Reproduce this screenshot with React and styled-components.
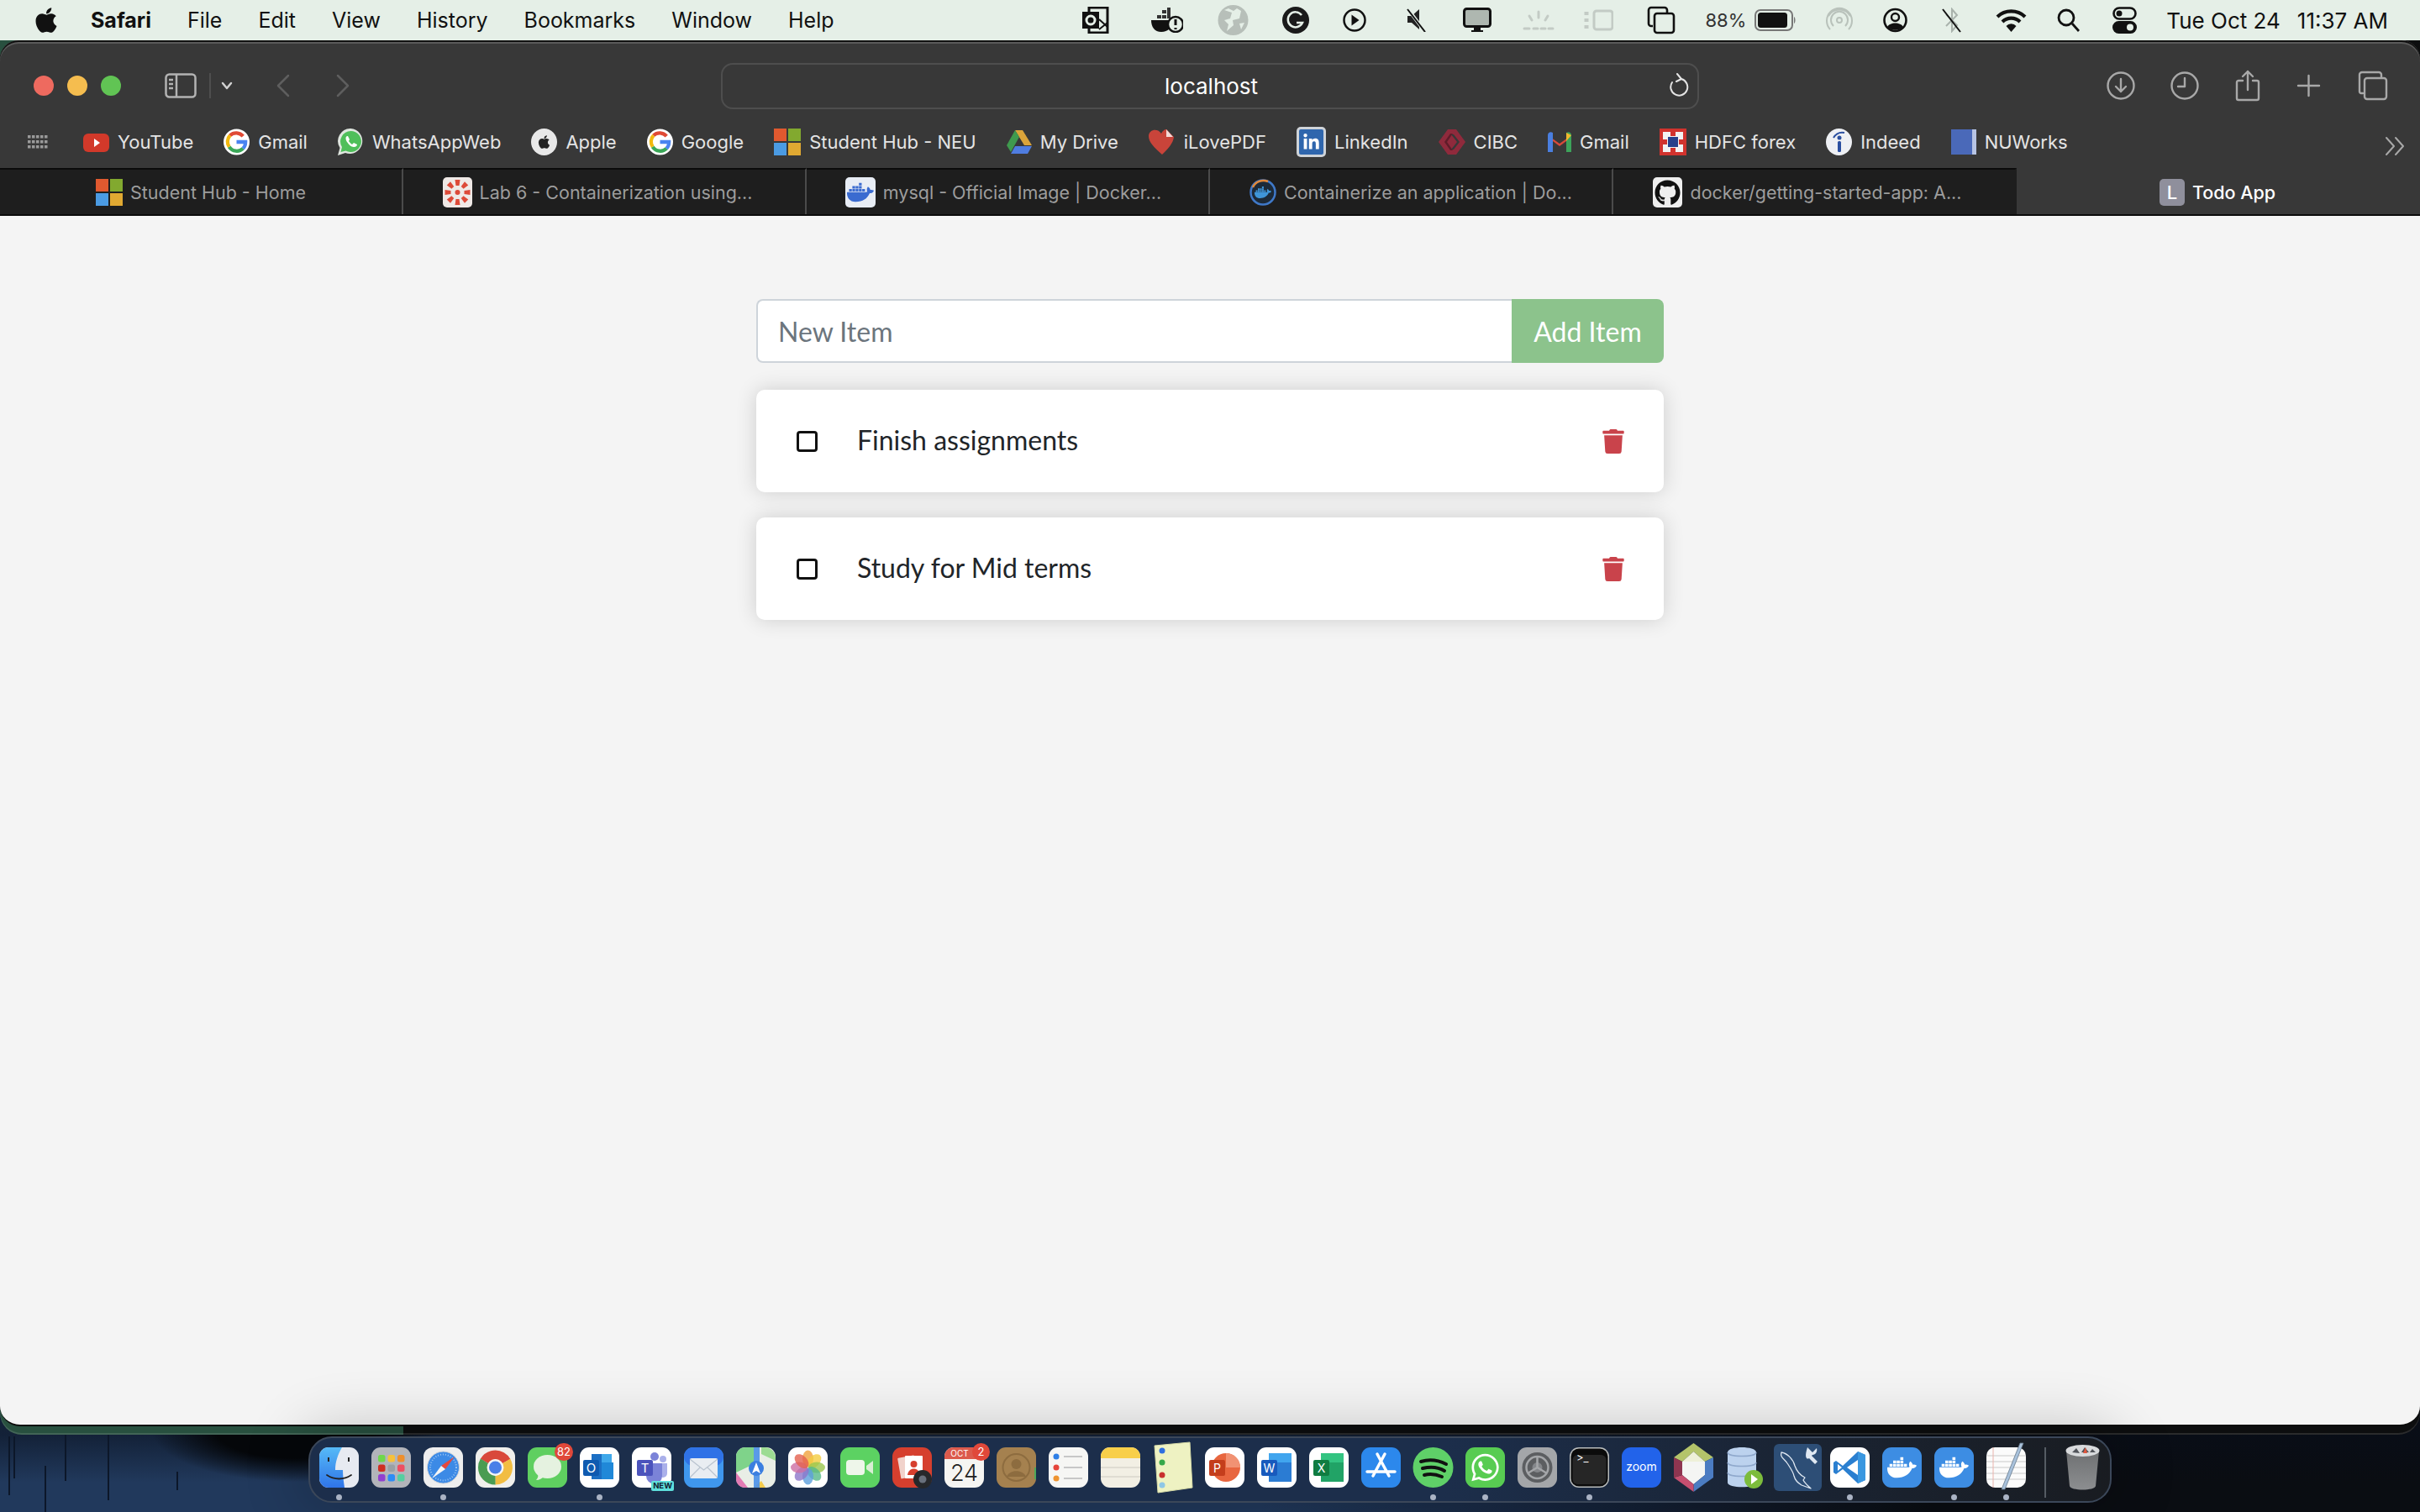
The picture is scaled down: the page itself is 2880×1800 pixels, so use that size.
import React from "react";
import styled, { createGlobalStyle } from "styled-components";
import { FaApple, FaTrash, FaDocker, FaWhatsapp, FaGithub, FaLinkedinIn } from "react-icons/fa";

const GlobalStyle = createGlobalStyle`
  html, body { margin: 0; padding: 0; background: #0b0e13; }
  * { box-sizing: border-box; }
`;

const reed = (x, y, h) => `linear-gradient(#0c1729, #0c1729) ${x}px ${y}px / 2px ${h}px no-repeat`;

const Desktop = styled.div`
  width: 2880px;
  height: 1800px;
  overflow: hidden;
  display: flex;
  flex-direction: column;
  font-family: Inter, "Liberation Sans", sans-serif;
  background:
    ${reed(10, 1710, 70)},
    ${reed(16, 1710, 50)},
    ${reed(53, 1745, 55)},
    ${reed(77, 1708, 55)},
    ${reed(128, 1708, 78)},
    ${reed(210, 1752, 22)},
    radial-gradient(ellipse 170px 62px at 350px 1702px, #05070a 55%, transparent 100%),
    linear-gradient(180deg, rgba(8, 14, 26, 0.55) 1708px, transparent 1765px),
    linear-gradient(90deg, #21395c 0, #21395c 1500px, #15233a 1900px, #0a0d12 2300px);
`;

const MenuBar = styled.header`
  height: 48px;
  flex: none;
  background: #e5efe7;
  display: flex;
  align-items: center;
  justify-content: space-between;
  padding: 0 38px 0 38px;
  color: #111;
  font-size: 25px;
`;

const MenuLeft = styled.nav`
  display: flex;
  align-items: center;
  gap: 43px;
  & > svg { margin-right: -7px; }
`;

const MenuItem = styled.span`
  font-weight: ${(p) => (p.$bold ? 700 : 400)};
`;

const MenuRight = styled.div`
  display: flex;
  align-items: center;
`;

const StatusSlot = styled.span`
  display: flex;
  align-items: center;
  justify-content: center;
  width: ${(p) => p.$w}px;
  margin-left: ${(p) => p.$ml}px;
`;

const StatusText = styled.span`
  margin-left: ${(p) => p.$ml}px;
  font-size: ${(p) => p.$size || 26}px;
  white-space: nowrap;
  color: ${(p) => p.$color || "#111"};
`;

const WindowStack = styled.div`
  height: 1660px;
  flex: none;
  padding-bottom: 10px;
  border-radius: 0 0 26px 26px;
  background: linear-gradient(90deg, #28503f 0, #28503f 480px, #0d0e0f 480px);
  box-shadow: inset 0 -2px 0 rgba(255, 255, 255, 0.12);
`;

const BrowserWindow = styled.main`
  height: 100%;
  border-radius: 22px 22px 24px 24px;
  overflow: hidden;
  display: flex;
  flex-direction: column;
  border-bottom: 2px solid #0b0b0b;
  background: #383838;
  box-shadow: inset 0 2px 0 #111, inset 0 4px 0 #5a5a5a;
`;

const Toolbar = styled.div`
  height: 100px;
  flex: none;
  padding-top: 8px;
  display: grid;
  grid-template-columns: 858px 1164px 1fr;
  align-items: center;
`;

const ToolbarLeft = styled.div`
  display: flex;
  align-items: center;
  padding-left: 40px;
`;

const TrafficLight = styled.span`
  width: 24px;
  height: 24px;
  border-radius: 50%;
  background: ${(p) => p.$color};
  margin-right: 16px;
`;

const NavIcon = styled.span`
  display: flex;
  margin-left: ${(p) => p.$ml}px;
`;

const AddressBar = styled.div`
  height: 55px;
  border: 2px solid #4e4e4e;
  border-radius: 14px;
  display: flex;
  align-items: center;
  justify-content: space-between;
  padding: 0 10px 0 526px;
  color: #fff;
  font-size: 26px;
`;

const ToolbarRight = styled.div`
  display: flex;
  align-items: center;
  justify-content: flex-end;
  padding-right: 38px;
`;

const BookmarkRow = styled.div`
  height: 52px;
  flex: none;
  padding: 0 18px 10px 33px;
  display: flex;
  align-items: center;
  color: #e4e4e4;
  font-size: 22px;
`;

const Bookmark = styled.span`
  display: flex;
  align-items: center;
  gap: 10px;
  margin-left: ${(p) => (p.$first ? 42 : 36)}px;
  white-space: nowrap;
`;

const OverflowIcon = styled.span`
  margin-left: auto;
  display: flex;
  padding-top: 10px;
`;

const TabStrip = styled.div`
  height: 57px;
  flex: none;
  display: grid;
  grid-template-columns: repeat(6, 1fr);
  border-bottom: 2px solid #0b0b0b;
`;

const Tab = styled.div`
  display: flex;
  align-items: center;
  justify-content: center;
  gap: 9px;
  font-size: 21.5px;
  white-space: nowrap;
  padding-right: ${(p) => p.$nudge || 0}px;
  border-top: 2px solid ${(p) => (p.$active ? "#383838" : "#0b0b0b")};
  border-right: 2px solid ${(p) => (p.$active || p.$last ? "transparent" : "#4b4b4b")};
  background: ${(p) => (p.$active ? "#383838" : "#1e1e1e")};
  color: ${(p) => (p.$active ? "#fff" : "#9d9d9d")};
  font-weight: ${(p) => (p.$active ? 500 : 400)};
`;

const Page = styled.section`
  flex: 1;
  background: #f4f4f4;
  padding-top: 99px;
  font-family: Lato, "Liberation Sans", sans-serif;
`;

const TodoColumn = styled.div`
  width: 1080px;
  margin: 0 auto;
  display: flex;
  flex-direction: column;
`;

const AddForm = styled.form`
  height: 76px;
  display: flex;
  margin-bottom: 32px;
`;

const ItemInput = styled.input`
  flex: 1;
  min-width: 0;
  border: 2px solid #ced4da;
  border-right: none;
  border-radius: 8px 0 0 8px;
  background: #fff;
  padding: 0 24px;
  font: 400 32px Lato, sans-serif;
  color: #495057;
  &::placeholder { color: #6c757d; opacity: 1; }
`;

const AddButton = styled.button`
  width: 181px;
  border: none;
  border-radius: 0 8px 8px 0;
  background: #8cc38c;
  color: #fff;
  font: 400 32px Lato, sans-serif;
`;

const ItemCard = styled.article`
  height: 122px;
  margin-bottom: 30px;
  padding: 0 47px 0 48px;
  background: #fff;
  border-radius: 10px;
  box-shadow: 0 0 24px rgba(0, 0, 0, 0.16);
  display: flex;
  align-items: center;
  color: #212529;
  font-size: 32px;
`;

const CheckBox = styled.span`
  width: 25px;
  height: 25px;
  flex: none;
  border: 3px solid #111;
  border-radius: 4px;
  margin-right: 47px;
`;

const ItemName = styled.span`
  flex: 1;
  padding-bottom: 3px;
`;

const DeleteIcon = styled(FaTrash)`
  width: 26px;
  height: 29px;
  color: #c9434b;
`;

const DockRow = styled.footer`
  display: flex;
  justify-content: center;
  padding-top: 2px;
  position: relative;
  z-index: 2;
`;

const Dock = styled.div`
  height: 79px;
  padding: 11px 11px 0;
  display: flex;
  gap: 15px;
  border: 2px solid #3b4759;
  border-radius: 28px;
  background: linear-gradient(90deg, #1c2e4b 0, #1c2e4b 1350px, #1a2434 1750px, #191c21 2146px);
  box-shadow: 0 0 70px 10px rgba(0, 0, 0, 0.2);
`;

const DockSlot = styled.div`
  position: relative;
  width: ${(p) => p.$w || 47}px;
  height: 48px;
  flex: none;
  &::after {
    content: "";
    display: ${(p) => (p.$running ? "block" : "none")};
    position: absolute;
    left: 20px;
    top: 56px;
    width: 7px;
    height: 7px;
    border-radius: 50%;
    background: #aab3c4;
  }
  & > svg { display: block; overflow: visible; }
`;

const DockBadge = styled.span`
  position: absolute;
  top: -5px;
  right: -7px;
  min-width: 21px;
  height: 21px;
  padding: 0 3px;
  border-radius: 11px;
  background: #e0483a;
  color: #fff;
  font-size: 13px;
  line-height: 21px;
  text-align: center;
`;

const NewTag = styled.span`
  position: absolute;
  right: -3px;
  bottom: -4px;
  padding: 0 2px;
  border-radius: 2px;
  background: #5fe0dc;
  color: #123;
  font-size: 9.5px;
  line-height: 12px;
  font-weight: 700;
`;

const DockDivider = styled.span`
  width: 2px;
  height: 60px;
  margin: 0 7px;
  background: #555b63;
`;

const stroke = { fill: "none", stroke: "currentColor", strokeLinecap: "round", strokeLinejoin: "round" };

/* ---- menu bar glyphs ---- */
const OutlookGlyph = () => (
  <svg width="32" height="32" viewBox="0 0 32 32"><path d="M8 1h22v30H8z" fill="none" stroke="#111" strokeWidth="3" /><path d="M0 6h20v20H0z" fill="#111" /><circle cx="10" cy="16" r="5" fill="none" stroke="#e5efe7" strokeWidth="3" /><path d="M20 15l10 9M20 27l10-8" stroke="#111" strokeWidth="2" /></svg>
);
const DockerAlert = () => (
  <svg width="38" height="30" viewBox="0 0 38 30"><path d="M0 15h25c0 9-5 14-13 14S0 23 0 15z" fill="#111" /><path d="M7 9h5v4H7zM13 9h5v4h-5zM13 3h5v4h-5zM19 0h4v13h-4z" fill="#333" /><circle cx="29" cy="20" r="9" fill="#e5efe7" stroke="#111" strokeWidth="2.5" /><path d="M29 14v7M29 24v2" stroke="#111" strokeWidth="3" /></svg>
);
const GlobeGlyph = () => (
  <svg width="37" height="36" viewBox="0 0 37 36"><circle cx="18.5" cy="18" r="18" fill="#b7bfb9" /><path d="M8 6l9 3-2 7-7 2 5 5-2 8 8-7-1-6 8-2 2-9-5-3-4 3-6-3zM26 22l6-1-4 8z" fill="#e5efe7" /></svg>
);
const GrammarlyGlyph = () => (
  <svg width="32" height="32" viewBox="0 0 32 32"><circle cx="16" cy="16" r="16" fill="#1a1a1a" /><path d="M23 10a9 9 0 1 0 1 9h-7" fill="none" stroke="#e5efe7" strokeWidth="2.5" /></svg>
);
const PlayGlyph = () => (
  <svg width="28" height="30" viewBox="0 0 28 30"><circle cx="14" cy="15" r="12.5" fill="none" stroke="#111" strokeWidth="2.5" /><path d="M10.5 8.5l9 6.5-9 6.5z" fill="#111" /></svg>
);
const MuteGlyph = () => (
  <svg width="26" height="28" viewBox="0 0 26 28"><path d="M3 9h5l9-8v24l-9-8H3z" fill="#222" /><path d="M3 0l21 28" stroke="#e5efe7" strokeWidth="4" /><path d="M3 1l21 27" stroke="#111" strokeWidth="2" /></svg>
);
const DisplayGlyph = () => (
  <svg width="34" height="30" viewBox="0 0 34 30"><rect x="1.5" y="1.5" width="31" height="21" rx="3" fill="#aeb7b0" stroke="#111" strokeWidth="3" /><path d="M13 23h8v4h-8zM10 27h14v2H10z" fill="#111" /></svg>
);
const BrightnessGlyph = () => (
  <svg width="38" height="24" viewBox="0 0 38 24" stroke="#c3cbc5" strokeWidth="3" strokeLinecap="round"><path d="M19 2v7M8 7l3 5M30 7l-3 5M2 22h6M13 22h5M22 22h5M31 22h5" /></svg>
);
const StageGlyph = () => (
  <svg width="35" height="26" viewBox="0 0 35 26" fill="none" stroke="#c3cbc5" strokeWidth="3"><rect x="12" y="2" width="22" height="22" rx="3" /><path d="M3 3v4M3 11v4M3 19v4" strokeWidth="5" /></svg>
);
const CopyGlyph = () => (
  <svg width="34" height="34" viewBox="0 0 34 34" fill="none" stroke="#111" strokeWidth="2.6"><path d="M7 24H5a3 3 0 0 1-3-3V5a3 3 0 0 1 3-3h16a3 3 0 0 1 3 3v3" /><rect x="9" y="9" width="23" height="23" rx="3" /></svg>
);
const BatteryGlyph = () => (
  <svg width="50" height="26" viewBox="0 0 50 26"><rect x="1" y="1" width="44" height="24" rx="6" fill="none" stroke="#777" strokeWidth="2" /><rect x="4" y="4" width="35" height="18" rx="3.5" fill="#111" /><path d="M47 9c2 1 2 7 0 8z" fill="#777" /></svg>
);
const AirdropGlyph = () => (
  <svg width="32" height="34" viewBox="0 0 32 34" fill="none" stroke="#b9c2bb" strokeWidth="2"><circle cx="16" cy="17" r="3" /><path d="M9 24a10 10 0 1 1 14 0M5 28a15 15 0 1 1 22 0M3 12a15 15 0 0 1 26 0" /></svg>
);
const UserGlyph = () => (
  <svg width="29" height="32" viewBox="0 0 29 32"><circle cx="14.5" cy="16" r="13" fill="none" stroke="#111" strokeWidth="2.6" /><circle cx="14.5" cy="12.5" r="4.5" fill="none" stroke="#111" strokeWidth="2.4" /><path d="M5 24c3-6 16-6 19 0-4 5-15 5-19 0z" fill="#111" /></svg>
);
const BluetoothOff = () => (
  <svg width="25" height="30" viewBox="0 0 25 30" fill="none"><path d="M6 8l13 13-6 7V2l6 7L6 22" stroke="#a9b2ac" strokeWidth="2" /><path d="M2 2l21 27" stroke="#111" strokeWidth="2" /></svg>
);
const WifiGlyph = () => (
  <svg width="37" height="28" viewBox="0 0 37 28" fill="none" stroke="#111" strokeWidth="4.2"><path d="M2 10a24 24 0 0 1 33 0M8 16a15 15 0 0 1 21 0" /><path d="M18.5 28l-6-7a8 8 0 0 1 12 0z" fill="#111" stroke="none" /></svg>
);
const SearchGlyph = () => (
  <svg width="27" height="28" viewBox="0 0 27 28" fill="none" stroke="#111" strokeWidth="2.8"><circle cx="11" cy="11" r="9" /><path d="M18 18l8 9" /></svg>
);
const ControlGlyph = () => (
  <svg width="29" height="32" viewBox="0 0 29 32"><rect x="1.5" y="1.5" width="26" height="13" rx="6.5" fill="none" stroke="#111" strokeWidth="2.6" /><circle cx="8" cy="8" r="3.5" fill="#111" /><rect x="0" y="17" width="29" height="15" rx="7.5" fill="#111" /><circle cx="21" cy="24.5" r="4" fill="#e5efe7" /></svg>
);

const statusItems = [
  { w: 32, ml: 0, el: <OutlookGlyph /> },
  { w: 38, ml: 50, el: <DockerAlert /> },
  { w: 37, ml: 41, el: <GlobeGlyph /> },
  { w: 32, ml: 40, el: <GrammarlyGlyph /> },
  { w: 28, ml: 40, el: <PlayGlyph /> },
  { w: 26, ml: 46, el: <MuteGlyph /> },
  { w: 34, ml: 43, el: <DisplayGlyph /> },
  { w: 38, ml: 37, el: <BrightnessGlyph /> },
  { w: 35, ml: 35, el: <StageGlyph /> },
  { w: 34, ml: 40, el: <CopyGlyph /> },
];
const trayItems = [
  { w: 32, ml: 35, el: <AirdropGlyph /> },
  { w: 29, ml: 36, el: <UserGlyph /> },
  { w: 25, ml: 40, el: <BluetoothOff /> },
  { w: 37, ml: 40, el: <WifiGlyph /> },
  { w: 27, ml: 36, el: <SearchGlyph /> },
  { w: 29, ml: 39, el: <ControlGlyph /> },
];

/* ---- favicons ---- */
const GoogleIcon = () => (
  <svg width="31" height="32" viewBox="0 0 32 32" fill="none"><circle cx="16" cy="16" r="16" fill="#fff" /><path d="M24 9a11 11 0 0 0-16-1" stroke="#e04a35" strokeWidth="4.4" /><path d="M8 8a11 11 0 0 0-1 14" stroke="#f2b90f" strokeWidth="4.4" /><path d="M7 22a11 11 0 0 0 17 2" stroke="#3aa757" strokeWidth="4.4" /><path d="M24 24c2-2 3-4 3-8H16" stroke="#4a84f0" strokeWidth="4.4" /></svg>
);
const MicrosoftIcon = () => (
  <svg width="32" height="32" viewBox="0 0 32 32"><path d="M0 0h15v15H0z" fill="#e0592f" /><path d="M17 0h15v15H17z" fill="#82a92f" /><path d="M0 17h15v15H0z" fill="#4b9be3" /><path d="M17 17h15v15H17z" fill="#e0a932" /></svg>
);
const YouTubeIcon = () => (
  <svg width="31" height="32" viewBox="0 0 31 32"><rect y="6" width="31" height="22" rx="6" fill="#d2392a" /><path d="M13 12l7 5-7 5z" fill="#fff" /></svg>
);
const WhatsAppIcon = () => (
  <svg width="31" height="32" viewBox="0 0 31 32"><path d="M15.500 0a15 15 0 0 0-13 23L0 32l9-3a15 15 0 1 0 6.500-29z" fill="#dfe6df" /><path d="M15.500 3a12.500 12.500 0 0 0-10.500 19l-1.500 6 6-1.500A12.500 12.500 0 1 0 15.500 3z" fill="#4fbf5a" /><path d="M11 9c-2 1-2 4 0 7s5 6 8 6c3 0 4-2 4-3l-4-2-2 2c-2-1-3-3-4-4l1-2-2-4z" fill="#fff" /></svg>
);
const AppleIcon = () => (
  <svg width="31" height="32" viewBox="0 0 31 32"><ellipse cx="15.500" cy="16" rx="15.500" ry="16" fill="#e8e8e8" /><FaApple x="6.500" y="7" size="18" color="#222" /></svg>
);
const DriveIcon = () => (
  <svg width="30" height="28" viewBox="0 0 30 28"><path d="M10 0h9l11 18h-9z" fill="#dba43a" /><path d="M10 0l5 8L5 26 0 18z" fill="#3f9a4e" /><path d="M5 28l5-9h20l-5 9z" fill="#4f7de0" /></svg>
);
const LovePdfIcon = () => (
  <svg width="32" height="30" viewBox="0 0 32 30"><path d="M16 30C6 21 0 15 0 8c0-8 11-10 15-3 1-3 4-5 6-5l9 9c-1 8-7 14-14 21z" fill="#c9443a" /><path d="M21 0l8 9h-8z" fill="#f3d9d6" /></svg>
);
const LinkedInIcon = () => (
  <svg width="35" height="36" viewBox="0 0 35 36"><rect width="35" height="36" rx="5" fill="#cfd3d8" /><rect x="3" y="3" width="29" height="30" rx="2" fill="#2f66ad" /><FaLinkedinIn x="7" y="8" size="21" color="#fff" /></svg>
);
const CibcIcon = () => (
  <svg width="32" height="30" viewBox="0 0 32 30"><path d="M11 0h10l11 15-11 15H11L0 15z" fill="#8f2a3c" /><path d="M14 5l-7 10 7 10h3l-7-10 7-10z" fill="#5f1c29" /><path d="M18 6h-3l7 9-7 9h3l7-9z" fill="#383838" /></svg>
);
const GmailIcon = () => (
  <svg width="28" height="24" viewBox="0 0 28 24"><path d="M0 4l14 10L28 4v20h-6V11l-8 6-8-6v13H0z" fill="#d84a3a" /><path d="M0 4c0-3 3-5 6-3v23H0z" fill="#4a7fe0" /><path d="M22 1c3-2 6 0 6 3v20h-6z" fill="#3da35a" /><path d="M22 1l6 3-6 7z" fill="#f0b92e" /></svg>
);
const HdfcIcon = () => (
  <svg width="32" height="32" viewBox="0 0 32 32"><rect width="32" height="32" fill="#d1332e" /><path d="M4 4h9v5h6V4h9v9h-5v6h5v9h-9v-5h-6v5H4v-9h5v-6H4z" fill="#f2f2f2" /><rect x="10" y="10" width="12" height="12" fill="#27408b" /></svg>
);
const IndeedIcon = () => (
  <svg width="31" height="32" viewBox="0 0 31 32"><ellipse cx="15.500" cy="16" rx="15.500" ry="16" fill="#eef0f4" /><path d="M9 11c3-5 8-7 13-6" stroke="#2a4fa0" strokeWidth="2" fill="none" /><circle cx="16" cy="11" r="2.500" fill="#2a4fa0" /><rect x="14" y="15" width="4" height="13" rx="1.500" fill="#2a4fa0" /></svg>
);
const NuWorksIcon = () => (
  <svg width="30" height="30" viewBox="0 0 30 30"><rect width="30" height="30" fill="#4a69b9" /><rect x="25" width="5" height="30" fill="#b7c4e4" /></svg>
);
const AppsGridIcon = () => (
  <svg width="24" height="16" viewBox="0 0 24 16" fill="#9a9a9a">
    {[0, 6, 12].flatMap((y) => [0, 5, 10, 15, 20].map((x) => <rect key={`${x}-${y}`} x={x} y={y} width="3.500" height="3.500" />))}
  </svg>
);
const CanvasIcon = () => (
  <svg width="35" height="36" viewBox="0 0 35 36"><rect width="35" height="36" rx="5" fill="#efe9e6" /><g fill="#dd4a38">{[0, 45, 90, 135, 180, 225, 270, 315].map((r) => <path key={r} d="M14.500 3h6l-1 7h-4z" transform={`rotate(${r} 17.500 18)`} />)}</g><circle cx="17.500" cy="18" r="3" fill="#dd4a38" /></svg>
);
const DockerTabIcon = () => (
  <svg width="36" height="36" viewBox="0 0 36 36"><rect width="36" height="36" rx="5" fill="#e8edf5" /><FaDocker x="2" y="2" size="32" color="#3a6bd0" /></svg>
);
const DockerDocsIcon = () => (
  <svg width="32" height="32" viewBox="0 0 32 32"><circle cx="16" cy="16" r="14.500" fill="#1d2a38" stroke="#3f78c8" strokeWidth="2.500" /><path d="M4 10a14 14 0 0 1 18-7" fill="none" stroke="#e0883a" strokeWidth="2.500" /><FaDocker x="6" y="6" size="20" color="#3f95d8" /></svg>
);
const GithubTabIcon = () => (
  <svg width="35" height="36" viewBox="0 0 35 36"><rect width="35" height="36" rx="5" fill="#eee" /><FaGithub x="2" y="3" size="31" color="#111" /></svg>
);

const LetterIcon = styled.span`
  width: 30px;
  height: 32px;
  border-radius: 5px;
  background: #8f8f9c;
  color: #fff;
  font-size: 22px;
  display: flex;
  align-items: center;
  justify-content: center;
`;

const bookmarks = [
  ["YouTube", <YouTubeIcon />],
  ["Gmail", <GoogleIcon />],
  ["WhatsAppWeb", <WhatsAppIcon />],
  ["Apple", <AppleIcon />],
  ["Google", <GoogleIcon />],
  ["Student Hub - NEU", <MicrosoftIcon />],
  ["My Drive", <DriveIcon />],
  ["iLovePDF", <LovePdfIcon />],
  ["LinkedIn", <LinkedInIcon />],
  ["CIBC", <CibcIcon />],
  ["Gmail", <GmailIcon />],
  ["HDFC forex", <HdfcIcon />],
  ["Indeed", <IndeedIcon />],
  ["NUWorks", <NuWorksIcon />],
];

const tabs = [
  { title: "Student Hub - Home", icon: <MicrosoftIcon /> },
  { title: "Lab 6 - Containerization using...", icon: <CanvasIcon />, nudge: 16 },
  { title: "mysql - Official Image | Docker...", icon: <DockerTabIcon />, nudge: 10 },
  { title: "Containerize an application | Do...", icon: <DockerDocsIcon /> },
  { title: "docker/getting-started-app: A...", icon: <GithubTabIcon />, nudge: 16 },
  { title: "Todo App", icon: <LetterIcon>L</LetterIcon>, active: true },
];

/* ---- dock tiles, 47x48 ---- */
const Tile = ({ fill = "#fff", children }) => (
  <svg width="47" height="48" viewBox="0 0 47 48">
    <rect width="47" height="48" rx="11" fill={fill} />
    {children}
  </svg>
);

const Finder = () => (
  <Tile fill="#e7eaf1">
    <defs><linearGradient id="fg" x1="0" y1="0" x2="0" y2="1"><stop offset="0" stopColor="#56baf7" /><stop offset="1" stopColor="#2f74e8" /></linearGradient></defs>
    <path d="M11 0h16c-5 9-8 17-8 27h9c0 7 1 14 2 21H11A11 11 0 0 1 0 37V11A11 11 0 0 1 11 0z" fill="url(#fg)" />
    <path d="M11 12v5M35 12v5" stroke="#222" strokeWidth="2" />
    <path d="M9 33c9 6 20 6 29 0" fill="none" stroke="#222" strokeWidth="1.800" strokeLinecap="round" />
  </Tile>
);
const Launchpad = () => {
  const c = ["#6fd84c", "#f6c13c", "#ee8f2d", "#cf2f22", "#9aa0a4", "#ee4f63", "#9140d0", "#2d8cf5", "#55cfa0"];
  return (
    <Tile fill="#b2b4ba">
      {c.map((f, i) => <rect key={f} x={8 + (i % 3) * 11.500} y={9 + Math.floor(i / 3) * 11.500} width="8.500" height="8.500" rx="2.500" fill={f} />)}
    </Tile>
  );
};
const Safari = () => (
  <Tile fill="#eeeeee">
    <circle cx="23.500" cy="24" r="19" fill="#3c8ae6" stroke="#cfd3d8" strokeWidth="1" />
    <circle cx="23.500" cy="24" r="15.500" fill="none" stroke="#9cc6f3" strokeWidth="2" strokeDasharray="1 2" />
    <path d="M37 11L21 22l5 4z" fill="#e6483d" />
    <path d="M10 37l16-11-5-4z" fill="#f5f5f5" />
  </Tile>
);
const Chrome = () => (
  <Tile fill="#f0efec">
    <circle cx="23.500" cy="24" r="15" fill="none" stroke="#d9483b" strokeWidth="11" strokeDasharray="31.420 62.830" transform="rotate(-150 23.500 24)" />
    <circle cx="23.500" cy="24" r="15" fill="none" stroke="#f2bd42" strokeWidth="11" strokeDasharray="31.420 62.830" transform="rotate(-30 23.500 24)" />
    <circle cx="23.500" cy="24" r="15" fill="none" stroke="#4a9c52" strokeWidth="11" strokeDasharray="31.420 62.830" transform="rotate(90 23.500 24)" />
    <circle cx="23.500" cy="24" r="10" fill="#f5f5f5" />
    <circle cx="23.500" cy="24" r="7.500" fill="#4a7fe8" />
  </Tile>
);
const Messages = () => (
  <Tile fill="#5fcf60">
    <ellipse cx="23.500" cy="23" rx="16.500" ry="14" fill="#e5f2e0" />
    <path d="M12 31c1 3 0 6-2 8 4 0 7-2 9-4z" fill="#e5f2e0" />
  </Tile>
);
const Outlook = () => (
  <Tile>
    <path d="M14 8h24v30H14z" fill="#1c6fc4" />
    <path d="M26 8h12v10H26z" fill="#3fa8ea" />
    <path d="M26 18h14v20H26z" fill="#2088d8" />
    <rect x="4" y="15" width="19" height="19" rx="2" fill="#0f5ab0" />
    <text x="13.500" y="30" textAnchor="middle" fontSize="15" fontFamily="Inter" fill="#fff">O</text>
  </Tile>
);
const Teams = () => (
  <Tile>
    <circle cx="27" cy="11" r="5" fill="#7b83d8" />
    <circle cx="37" cy="14" r="4" fill="#aab0ea" />
    <path d="M32 19h10v12a5 5 0 0 1-10 0z" fill="#aab0ea" />
    <path d="M17 19h19v15a9 9 0 0 1-19 0z" fill="#7b83d8" />
    <rect x="6" y="15" width="19" height="19" rx="2" fill="#4b53bc" />
    <text x="15.500" y="30" textAnchor="middle" fontSize="15" fontFamily="Inter" fill="#fff">T</text>
  </Tile>
);
const Mail = () => (
  <Tile fill="#3f97ee">
    <rect width="47" height="22" rx="11" fill="#2f72e6" />
    <rect x="7" y="13" width="33" height="24" rx="2" fill="#e9edf2" />
    <path d="M7 14l16.500 13L40 14M7 36l12-12M40 36L28 24" fill="none" stroke="#b9c3cf" strokeWidth="1.200" />
  </Tile>
);
const Maps = () => (
  <Tile fill="#e9eee6">
    <path d="M0 11A11 11 0 0 1 11 0h10v20L0 30z" fill="#7fd38a" />
    <path d="M34 0a13 13 0 0 1 13 13v3L30 8V0z" fill="#9ddc93" />
    <path d="M0 30l14 18H10A10 10 0 0 1 0 38z" fill="#e27bb4" />
    <path d="M30 40l5 8h-14z" fill="#f3cc4d" />
    <path d="M21 0h7v48h-7z" fill="#4a90e8" opacity="0.9" />
    <circle cx="24" cy="25" r="9" fill="#3b7fe0" />
    <path d="M24 18l5 13-5-3-5 3z" fill="#fff" />
  </Tile>
);
const Photos = () => {
  const c = ["#f0a13c", "#f4cc3f", "#9ac74e", "#56b98a", "#5c9fdc", "#8d76c9", "#cd6fa4", "#e4604f"];
  return (
    <Tile>
      {c.map((f, i) => <ellipse key={f} cx="23.500" cy="13.500" rx="6.500" ry="10" fill={f} opacity="0.8" transform={`rotate(${i * 45} 23.500 24)`} />)}
    </Tile>
  );
};
const FaceTime = () => (
  <Tile fill="#5cd262">
    <rect x="7" y="15" width="22" height="18" rx="4" fill="#eef6ea" />
    <path d="M31 22l8-6v16l-8-6z" fill="#d9eed4" />
  </Tile>
);
const PhotoBooth = () => (
  <Tile fill="#d63f2e">
    <rect x="8" y="11" width="20" height="25" rx="1" fill="#f1d2cb" transform="rotate(-10 18 23)" />
    <rect x="15" y="10" width="21" height="27" rx="1" fill="#fff" />
    <circle cx="25.500" cy="20" r="4" fill="#d63f2e" />
    <path d="M18 33c1-10 14-10 15 0z" fill="#d63f2e" />
    <circle cx="36" cy="38" r="11" fill="#26282b" />
    <circle cx="36" cy="38" r="4.500" fill="#68707c" />
  </Tile>
);
const Calendar = () => (
  <Tile fill="#f6f5f2">
    <path d="M0 14V11A11 11 0 0 1 11 0h25a11 11 0 0 1 11 11v3z" fill="#dc5a4c" />
    <text x="18" y="11" textAnchor="middle" fontSize="10" fontFamily="Inter" fill="#fff">OCT</text>
    <text x="23.500" y="40" textAnchor="middle" fontSize="27" fontFamily="Inter" fontWeight="300" fill="#222">24</text>
  </Tile>
);
const Contacts = () => (
  <Tile fill="#a5814f">
    <circle cx="23.500" cy="24" r="16" fill="none" stroke="#8d6c3f" strokeWidth="2" />
    <circle cx="23.500" cy="20" r="6" fill="#8d6c3f" />
    <path d="M12 35c3-9 20-9 23 0z" fill="#8d6c3f" />
    <path d="M45 24h2v14h-2z" fill="#4fa85a" />
  </Tile>
);
const Reminders = () => (
  <Tile fill="#f6f6f4">
    {[["#2f7fe6", 11], ["#e5443a", 24], ["#ee9330", 37]].map(([f, y]) => (
      <g key={y}>
        <circle cx="9" cy={y} r="3.500" fill={f} />
        <path d={`M18 ${y}h22`} stroke="#c7c7c7" strokeWidth="2" />
      </g>
    ))}
  </Tile>
);
const Notes = () => (
  <Tile fill="#f2efe4">
    <path d="M0 13V11A11 11 0 0 1 11 0h25a11 11 0 0 1 11 11v2z" fill="#f8cf4a" />
    <path d="M0 24h47M0 35h47" stroke="#d9d6cc" strokeWidth="1.500" />
  </Tile>
);
const Stickies = () => (
  <svg width="47" height="48" viewBox="0 0 47 48">
    <path d="M2-2L44-6l3 54-41 6z" fill="#eef2c2" stroke="#d8dca8" />
    {[["#2f6fe0", 4], ["#36a84a", 18], ["#c8302e", 33], ["#8fc7e6", 45]].map(([f, y]) => <circle key={y} cx="11" cy={y} r="3.500" fill={f} />)}
  </svg>
);
const OfficeTile = ({ back, mid, front, letter }) => (
  <Tile>
    <path d="M14 7h27v34H14z" fill={mid} />
    <path d="M14 7h27v11H14z" fill={back} />
    <rect x="5" y="15" width="19" height="19" rx="2" fill={front} />
    <text x="14.500" y="30" textAnchor="middle" fontSize="14" fontFamily="Inter" fill="#fff">{letter}</text>
  </Tile>
);
const PowerPoint = () => (
  <Tile>
    <circle cx="25" cy="24" r="17" fill="#e8663f" />
    <path d="M25 7a17 17 0 0 1 17 17H25z" fill="#f19273" />
    <rect x="5" y="15" width="19" height="19" rx="2" fill="#c43e1c" />
    <text x="14.500" y="30" textAnchor="middle" fontSize="14" fontFamily="Inter" fill="#fff">P</text>
  </Tile>
);
const AppStore = () => (
  <Tile fill="#2c88ec">
    <path d="M28 8L14 34M19 8l14 26M7 29h33" fill="none" stroke="#fff" strokeWidth="3.500" strokeLinecap="round" />
  </Tile>
);
const Spotify = () => (
  <svg width="47" height="48" viewBox="0 0 47 48">
    <circle cx="23.500" cy="24" r="24" fill="#5fd068" />
    <path d="M9 17c10-3 20-2 30 3M11 25c8-2 18-2 26 3M13 33c7-2 14-1 21 2" fill="none" stroke="#111" strokeWidth="4" strokeLinecap="round" />
  </svg>
);
const WhatsApp = () => (
  <Tile fill="#58cc52"><FaWhatsapp x="5" y="5.500" size="37" color="#fff" /></Tile>
);
const SystemPrefs = () => (
  <Tile fill="#a4a6a9">
    <circle cx="23.500" cy="24" r="18" fill="#5c5e61" />
    <circle cx="23.500" cy="24" r="13" fill="none" stroke="#a4a6a9" strokeWidth="2.500" />
    <circle cx="23.500" cy="24" r="6" fill="#84868a" />
    <path d="M23.500 24V11M23.500 24L35 31M23.500 24L12 31" stroke="#a4a6a9" strokeWidth="2.500" />
  </Tile>
);
const Terminal = () => (
  <Tile fill="#b9bcbc">
    <rect x="1.500" y="1.500" width="44" height="45" rx="9.500" fill="#0b0b0b" />
    <rect x="3.500" y="9" width="40" height="35" rx="6" fill="#262626" />
    <text x="8" y="17" fontSize="13" fontFamily="Inter" fill="#fff">{">_"}</text>
  </Tile>
);
const Zoom = () => (
  <Tile fill="#2263ea">
    <text x="23.500" y="28" textAnchor="middle" fontSize="14" fontFamily="Inter" fill="#fff">zoom</text>
  </Tile>
);
const Bootstrap = () => (
  <svg width="47" height="48" viewBox="0 0 47 48">
    <path d="M23.500-5L47 12 37 17 23.500 5 10 17 0 12z" fill="#b4c46a" />
    <path d="M23.500 5L37 17H10z" fill="#eef0d8" />
    <path d="M10 17h27v16L23.500 44 10 33z" fill="#f4f5f3" />
    <path d="M47 12v24L23.500 53v-9L37 33V17z" fill="#4b7cc2" />
    <path d="M0 36l10-3 13.500 11v9z" fill="#c64f70" />
    <path d="M0 12l10 5v16L0 36z" fill="#8e3550" />
  </svg>
);
const Database = () => (
  <svg width="47" height="48" viewBox="0 0 47 48">
    <path d="M2 6c0-8 34-8 34 0v36c0 7-34 7-34 0z" fill="#bcd2ee" />
    <path d="M2 6c0 6 34 6 34 0M2 18c0 6 34 6 34 0M2 30c0 6 34 6 34 0" fill="none" stroke="#8fa8cc" strokeWidth="1.500" />
    <circle cx="33" cy="38" r="11" fill="#7cbc3c" />
    <path d="M30 32l8 6-8 6z" fill="#fff" />
  </svg>
);
const Workbench = () => (
  <svg width="47" height="48" viewBox="0 0 47 48">
    <rect x="-5" y="-4" width="57" height="56" rx="6" fill="#2d4e76" />
    <path d="M4 6c-2 6 4 8 7 13 4 6 7 10 8 15 1 4 4 8 9 11l11 4c-3-3-7-6-9-10l2-3c-5-2-10-8-12-14-2-8-9-15-16-16z" fill="none" stroke="#dfe8f2" strokeWidth="1.300" strokeLinejoin="round" />
    <path d="M35 0l6 6 5-5c1 4-1 8-5 8l-1 1 7 7-3 3-7-7c-3 2-6-1-2-13z" fill="#dfe8f2" />
  </svg>
);
const VSCode = () => (
  <Tile>
    <path d="M33 5l9 4v30l-9 4-18-17-8 6-3-2V18l3-2 8 6z" fill="#2a7fd0" />
    <path d="M33 5l9 4v30l-9 4z" fill="#3a97e0" />
    <path d="M33 15L20 24l13 9z" fill="#fff" />
    <path d="M9 20l5 4-5 4z" fill="#fff" />
  </Tile>
);
const Docker = () => (
  <Tile fill="#3d8de3"><FaDocker x="6" y="6.500" size="35" color="#fff" /></Tile>
);
const TextEdit = () => (
  <svg width="47" height="48" viewBox="0 0 47 48">
    <rect width="47" height="48" rx="10" fill="#fbfbfb" />
    <path d="M0 10h47M0 17h47M0 24h47M0 31h47M0 38h47" stroke="#c9c9c9" strokeWidth="1" />
    <path d="M8 0v48" stroke="#eab3ac" strokeWidth="1" />
    <path d="M44-5l-4 0L18 50l4 0z" fill="#a9c2dc" stroke="#66788c" strokeWidth="0.800" />
  </svg>
);
const Trash = () => (
  <svg width="43" height="48" viewBox="0 5 43 48">
    <defs><linearGradient id="tr" x1="0" y1="0" x2="0" y2="1"><stop offset="0" stopColor="#6e7072" /><stop offset="1" stopColor="#8c8e90" /></linearGradient></defs>
    <path d="M2 9h39l-4 42c-1 6-30 6-31 0z" fill="url(#tr)" />
    <ellipse cx="21.500" cy="9" rx="20" ry="7" fill="#d8dadc" />
    <path d="M9 11l5-5 4 6zM20 11l4-6 5 6zM30 11l3-4 4 4z" fill="#51545a" />
    <path d="M22 12l3-7 2 7z" fill="#e0583f" />
  </svg>
);

const dockApps = [
  { id: "finder", el: <Finder />, running: true },
  { id: "launchpad", el: <Launchpad /> },
  { id: "safari", el: <Safari />, running: true },
  { id: "chrome", el: <Chrome /> },
  { id: "messages", el: <Messages />, badge: "82" },
  { id: "outlook", el: <Outlook />, running: true },
  { id: "teams", el: <Teams />, isNew: true },
  { id: "mail", el: <Mail /> },
  { id: "maps", el: <Maps /> },
  { id: "photos", el: <Photos /> },
  { id: "facetime", el: <FaceTime /> },
  { id: "photobooth", el: <PhotoBooth /> },
  { id: "calendar", el: <Calendar />, badge: "2" },
  { id: "contacts", el: <Contacts /> },
  { id: "reminders", el: <Reminders /> },
  { id: "notes", el: <Notes /> },
  { id: "stickies", el: <Stickies /> },
  { id: "powerpoint", el: <PowerPoint /> },
  { id: "word", el: <OfficeTile back="#41a5ee" mid="#2b7cd3" front="#185abd" letter="W" /> },
  { id: "excel", el: <OfficeTile back="#33c481" mid="#21a366" front="#107c41" letter="X" /> },
  { id: "appstore", el: <AppStore /> },
  { id: "spotify", el: <Spotify />, running: true },
  { id: "whatsapp", el: <WhatsApp />, running: true },
  { id: "prefs", el: <SystemPrefs /> },
  { id: "terminal", el: <Terminal />, running: true },
  { id: "zoom", el: <Zoom /> },
  { id: "bootstrap", el: <Bootstrap /> },
  { id: "database", el: <Database /> },
  { id: "workbench", el: <Workbench /> },
  { id: "vscode", el: <VSCode />, running: true },
  { id: "docker", el: <Docker /> },
  { id: "docker2", el: <Docker />, running: true },
  { id: "textedit", el: <TextEdit />, running: true },
];

const menus = ["File", "Edit", "View", "History", "Bookmarks", "Window", "Help"];
const todos = ["Finish assignments", "Study for Mid terms"];

export default function App() {
  return (
    <Desktop>
      <GlobalStyle />
      <MenuBar>
        <MenuLeft>
          <FaApple size={34} color="#111" />
          <MenuItem $bold>Safari</MenuItem>
          {menus.map((m) => <MenuItem key={m}>{m}</MenuItem>)}
        </MenuLeft>
        <MenuRight>
          {statusItems.map((s, i) => <StatusSlot key={i} $w={s.w} $ml={s.ml}>{s.el}</StatusSlot>)}
          <StatusText $ml={36} $size={22} $color="#333">88%</StatusText>
          <StatusSlot $w={50} $ml={10}><BatteryGlyph /></StatusSlot>
          {trayItems.map((s, i) => <StatusSlot key={i} $w={s.w} $ml={s.ml}>{s.el}</StatusSlot>)}
          <StatusText $ml={35}>Tue Oct 24</StatusText>
          <StatusText $ml={20}>11:37 AM</StatusText>
        </MenuRight>
      </MenuBar>

      <WindowStack>
        <BrowserWindow>
          <Toolbar>
            <ToolbarLeft>
              <TrafficLight $color="#ee6a5f" />
              <TrafficLight $color="#f5bd4f" />
              <TrafficLight $color="#61c454" />
              <NavIcon $ml={36}>
                <svg width="38" height="30" viewBox="0 0 38 30" fill="none" stroke="#b3b3b3" strokeWidth="2.500"><rect x="1.500" y="1.500" width="35" height="27" rx="4" /><path d="M14 2v26M5 8h5M5 13h5M5 18h5" /></svg>
              </NavIcon>
              <NavIcon $ml={15}><svg width="2" height="30"><rect width="2" height="30" fill="#4e4e4e" /></svg></NavIcon>
              <NavIcon $ml={12}><svg width="14" height="10" viewBox="0 0 14 10" {...stroke} color="#d0d0d0" strokeWidth="2.500"><path d="M2 2l5 6 5-6" /></svg></NavIcon>
              <NavIcon $ml={52}><svg width="16" height="28" viewBox="0 0 16 28" {...stroke} color="#5e5e5e" strokeWidth="2.500"><path d="M14 2L2 14l12 12" /></svg></NavIcon>
              <NavIcon $ml={55}><svg width="16" height="28" viewBox="0 0 16 28" {...stroke} color="#5e5e5e" strokeWidth="2.500"><path d="M2 2l12 12L2 26" /></svg></NavIcon>
            </ToolbarLeft>
            <AddressBar>
              <span>localhost</span>
              <svg width="24" height="30" viewBox="0 0 24 30" {...stroke} color="#e4e4e4" strokeWidth="2"><path d="M15 7a10 10 0 1 1-11 4" /><path d="M10 1l5 6-6 3" /></svg>
            </AddressBar>
            <ToolbarRight>
              <svg width="36" height="34" viewBox="0 0 36 34" {...stroke} color="#a8a8a8" strokeWidth="2.400"><circle cx="18" cy="17" r="15.500" /><path d="M18 9v15M12 18l6 6 6-6" /></svg>
              <NavIcon $ml={41}><svg width="34" height="34" viewBox="0 0 34 34" {...stroke} color="#a8a8a8" strokeWidth="2.400"><circle cx="17" cy="17" r="15.500" /><path d="M17 8v10H9" /></svg></NavIcon>
              <NavIcon $ml={43}><svg width="30" height="38" viewBox="0 0 30 38" {...stroke} color="#a8a8a8" strokeWidth="2.400"><path d="M9 13H4a2 2 0 0 0-2 2v19a2 2 0 0 0 2 2h22a2 2 0 0 0 2-2V15a2 2 0 0 0-2-2h-5M15 24V2M9 8l6-6 6 6" /></svg></NavIcon>
              <NavIcon $ml={43}><svg width="29" height="28" viewBox="0 0 29 28" {...stroke} color="#a8a8a8" strokeWidth="2.400"><path d="M14.500 2v24M2 14h25" /></svg></NavIcon>
              <NavIcon $ml={44}><svg width="36" height="36" viewBox="0 0 36 36" {...stroke} color="#a8a8a8" strokeWidth="2.400"><path d="M6 27H4a2 2 0 0 1-2-2V5a3 3 0 0 1 3-3h20a3 3 0 0 1 3 3v3" /><rect x="8" y="9" width="26" height="25" rx="3" /></svg></NavIcon>
            </ToolbarRight>
          </Toolbar>

          <BookmarkRow>
            <AppsGridIcon />
            {bookmarks.map(([label, icon], i) => (
              <Bookmark key={i} $first={i === 0}>{icon}{label}</Bookmark>
            ))}
            <OverflowIcon>
              <svg width="24" height="24" viewBox="0 0 24 24" {...stroke} color="#a8a8a8" strokeWidth="2"><path d="M2 2l9 10-9 10M13 2l9 10-9 10" /></svg>
            </OverflowIcon>
          </BookmarkRow>

          <TabStrip>
            {tabs.map((t, i) => (
              <Tab key={t.title} $active={t.active} $last={i === 4} $nudge={t.nudge}>{t.icon}{t.title}</Tab>
            ))}
          </TabStrip>

          <Page>
            <TodoColumn>
              <AddForm>
                <ItemInput placeholder="New Item" />
                <AddButton type="button">Add Item</AddButton>
              </AddForm>
              {todos.map((todo) => (
                <ItemCard key={todo}>
                  <CheckBox />
                  <ItemName>{todo}</ItemName>
                  <DeleteIcon />
                </ItemCard>
              ))}
            </TodoColumn>
          </Page>
        </BrowserWindow>
      </WindowStack>

      <DockRow>
        <Dock>
          {dockApps.map((a) => (
            <DockSlot key={a.id} $running={a.running}>
              {a.el}
              {a.badge && <DockBadge>{a.badge}</DockBadge>}
              {a.isNew && <NewTag>NEW</NewTag>}
            </DockSlot>
          ))}
          <DockDivider />
          <DockSlot $w={43}><Trash /></DockSlot>
        </Dock>
      </DockRow>
    </Desktop>
  );
}
